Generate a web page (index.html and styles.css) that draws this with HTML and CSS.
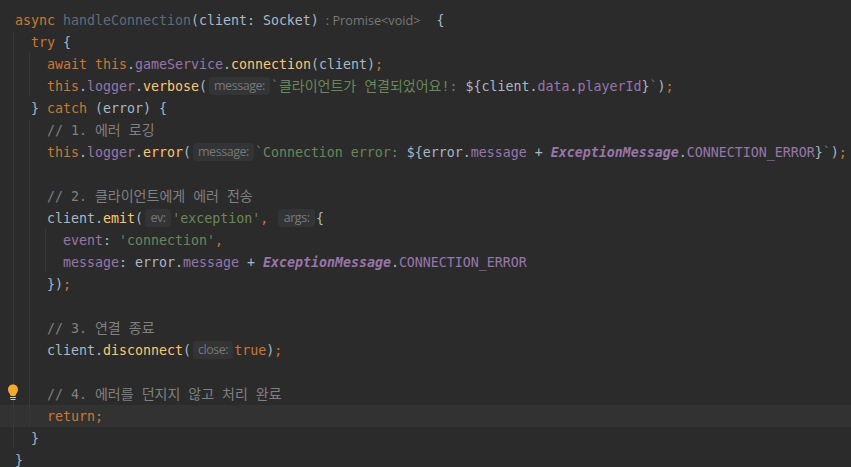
FILE: index.html
```html
<!DOCTYPE html>
<html lang="ko">
<head>
<meta charset="utf-8">
<title>handleConnection</title>
<link rel="stylesheet" href="styles.css">
</head>
<body>
<main class="editor">
<div class="guide g1"></div>
<div class="guide g2"></div>
<div class="guide g3"></div>
<div class="guide g4"></div>
<svg class="bulb" width="12" height="18" viewBox="0 0 12 18"><path d="M6 0.5C2.8 0.5 1 2.8 1 5.4 1 7.6 2.2 8.8 3 10.2 3.4 10.9 3.5 11.3 3.6 12H8.4C8.5 11.3 8.6 10.9 9 10.2 9.8 8.8 11 7.6 11 5.4 11 2.8 9.2 0.5 6 0.5Z" fill="#f2a92e"/><path d="M3 13.5H9M3.5 15.5H8.5" stroke="#c9c9c9" stroke-width="1" fill="none"/></svg>
<div class="line l0"><span class="k">async</span> <span class="un">handleConnection</span>(client: Socket)<span class="ret">: Promise&lt;void&gt;</span>{</div>
<div class="line l1"><span class="k">try</span> {</div>
<div class="line l2"><span class="k">await this</span>.<span class="p">gameService</span>.<span class="f">connection</span>(client)<span class="k">;</span></div>
<div class="line l2"><span class="k">this</span>.<span class="p">logger</span>.<span class="f">verbose</span>(<span class="hint">message:</span><span class="s">`<span class="ko">클라이언트가</span> <span class="ko">연결되었어요</span>!: </span>${client.<span class="p">data</span>.<span class="p">playerId</span>}<span class="s">`</span>)<span class="k">;</span></div>
<div class="line l1">} <span class="k">catch</span> (error) {</div>
<div class="line l2"><span class="c">// 1. <span class="ko">에러</span> <span class="ko">로깅</span></span></div>
<div class="line l2"><span class="k">this</span>.<span class="p">logger</span>.<span class="f">error</span>(<span class="hint">message:</span><span class="s">`Connection error: </span>${error.<span class="p">message</span> + <span class="cls">ExceptionMessage</span>.<span class="p">CONNECTION_ERROR</span>}<span class="s">`</span>)<span class="k">;</span></div>
<div class="line l2"></div>
<div class="line l2"><span class="c">// 2. <span class="ko">클라이언트에게</span> <span class="ko">에러</span> <span class="ko">전송</span></span></div>
<div class="line l2">client.<span class="f">emit</span>(<span class="hint short">ev:</span><span class="s">'exception'</span><span class="k">,</span> <span class="hint short">args:</span>{</div>
<div class="line l3"><span class="p">event</span>: <span class="s">'connection'</span><span class="k">,</span></div>
<div class="line l3"><span class="p">message</span>: error.<span class="p">message</span> + <span class="cls">ExceptionMessage</span>.<span class="p">CONNECTION_ERROR</span></div>
<div class="line l2">})<span class="k">;</span></div>
<div class="line l2"></div>
<div class="line l2"><span class="c">// 3. <span class="ko">연결</span> <span class="ko">종료</span></span></div>
<div class="line l2">client.<span class="f">disconnect</span>(<span class="hint">close:</span><span class="k">true</span>)<span class="k">;</span></div>
<div class="line l2"></div>
<div class="line l2"><span class="c">// 4. <span class="ko">에러를</span> <span class="ko">던지지</span> <span class="ko">않고</span> <span class="ko">처리</span> <span class="ko">완료</span></span></div>
<div class="line l2 caret"><span class="k">return;</span></div>
<div class="line l1">}</div>
<div class="line l0">}</div>
</main>
</body>
</html>
```
FILE: styles.css
```css
html, body {
  margin: 0;
  padding: 0;
  background: #2b2b2b;
}
.editor {
  position: relative;
  width: 851px;
  height: 467px;
  overflow: hidden;
  box-sizing: border-box;
  padding-top: 9px;
  background: #2b2b2b;
  color: #a9b7c6;
  font-family: "DejaVu Sans Mono", "Noto Sans CJK KR", monospace;
  font-size: 13.29px;
}
.line {
  height: 22px;
  line-height: 24px;
  white-space: pre;
}
.l0 { padding-left: 15px; }
.l1 { padding-left: 31px; }
.l2 { padding-left: 47px; }
.l3 { padding-left: 63px; }
.caret { background: #323232; }
.k { color: #cc7832; }
.f { color: #ffc66d; }
.p { color: #9876aa; }
.s { color: #6a8759; }
.c { color: #808080; }
.un { color: #5f6b78; }
.cls { color: #9876aa; font-style: italic; font-weight: bold; }
.ko { font-family: "Noto Sans CJK KR", sans-serif; font-size: 14px; line-height: 0; }
.hint, .ret {
  font-family: "Open Sans", sans-serif;
  color: #787878;
}
.hint {
  display: inline-block;
  height: 18px;
  line-height: 17px;
  padding: 0 5px;
  margin: 2px 1px 0 2px;
  border-radius: 4px;
  background: #333435;
  vertical-align: top;
  font-size: 12.5px;
  letter-spacing: -0.45px;
}
.short { padding: 0 5.5px; }
.ret { font-size: 12.7px; line-height: 0; margin: 0 16px 0 7px; }
.guide {
  position: absolute;
  width: 1px;
  background: #393939;
}
.g1 { left: 13px; top: 31px; height: 418px; }
.g2 { left: 29px; top: 53px; height: 44px; }
.g3 { left: 29px; top: 119px; height: 308px; }
.g4 { left: 45px; top: 229px; height: 44px; }
.bulb {
  position: absolute;
  left: 7px;
  top: 384px;
}
```
